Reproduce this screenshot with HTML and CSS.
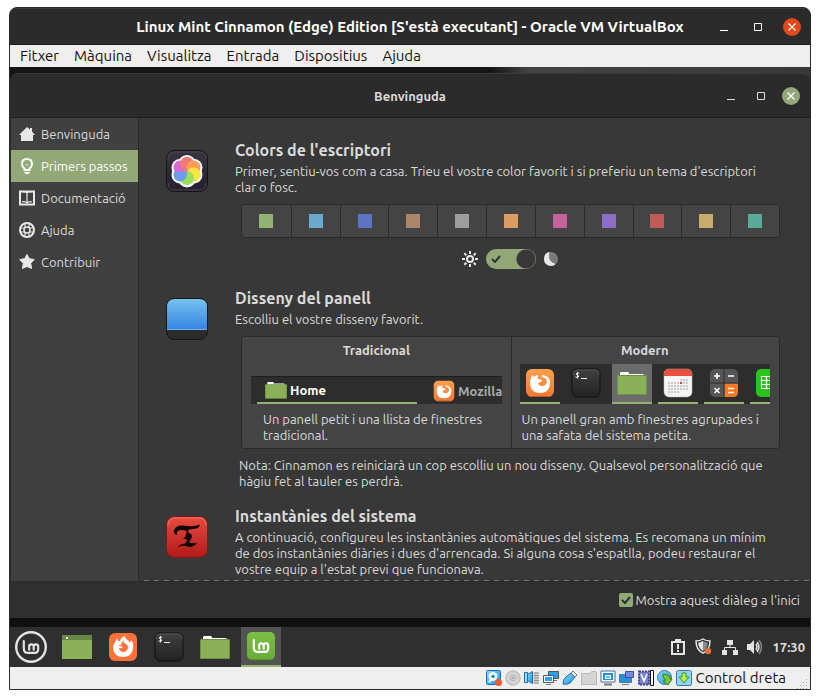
FILE: index.html
```html
<!DOCTYPE html>
<html lang="ca">
<head>
<meta charset="utf-8">
<meta name="viewport" content="width=device-width, initial-scale=1">
<title>Benvinguda</title>
<link rel="stylesheet" href="styles.css">
</head>
<body>
<svg class="defs" aria-hidden="true">
  <defs>
    <linearGradient id="g-dark" x1="0" y1="0" x2="0" y2="1"><stop offset="0" stop-color="#404040"/><stop offset="1" stop-color="#222"/></linearGradient>
    <linearGradient id="g-orange" x1="0" y1="0" x2="0" y2="1"><stop offset="0" stop-color="#ffa04c"/><stop offset="1" stop-color="#f27835"/></linearGradient>
    <linearGradient id="g-green" x1="0" y1="0" x2="0" y2="1"><stop offset="0" stop-color="#7cbf45"/><stop offset="1" stop-color="#69ac36"/></linearGradient>
    <linearGradient id="g-sky" x1="0" y1="0" x2="0" y2="1"><stop offset="0" stop-color="#77c4ee"/><stop offset="1" stop-color="#3584e4"/></linearGradient>
    <linearGradient id="g-red" x1="0" y1="0" x2="0" y2="1"><stop offset="0" stop-color="#e84c40"/><stop offset="1" stop-color="#b11a1b"/></linearGradient>
    <linearGradient id="g-plum" x1="0" y1="0" x2="0" y2="1"><stop offset="0" stop-color="#3a3340"/><stop offset="1" stop-color="#271f2e"/></linearGradient>
    <linearGradient id="g-blue" x1="0" y1="0" x2="1" y2="1"><stop offset="0" stop-color="#8fe0ff"/><stop offset="1" stop-color="#1b8fe0"/></linearGradient>
  </defs>
  <symbol id="folder" viewBox="0 0 30 24"><path d="M3 6V2l1-1h7l1 1v1h14l1 1v3H3z" fill="#fff"/><path d="M0 5q0-1 1-1h28q1 0 1 1v18q0 1-1 1H1q-1 0-1-1z" fill="#6c9044"/><path d="M1 5h28v18H1z" fill="#8bb158"/></symbol>
  <symbol id="terminal" viewBox="0 0 30 30"><rect x="1" y="1" width="28" height="28" rx="5" fill="url(#g-dark)" stroke="#111"/><path d="M2 7q0-5 5-5h16q5 0 5 5" fill="none" stroke="#575757"/><path d="M8.200 5.500Q7 4.800 5.800 5.200Q4.300 6 6.200 7.100Q8.700 8 7.400 9Q6 9.800 4.500 8.800M6.500 4v6.500" fill="none" stroke="#eee"/><path d="M10 10.500h6" stroke="#eee"/></symbol>
  <symbol id="firefox" viewBox="0 0 30 30"><rect x="1" y="1" width="28" height="28" rx="6" fill="url(#g-orange)"/><path d="M7 28.500h16" stroke="#b75a20"/><path d="M6 10l1-3 2 2q2-2 4-2-1 2 0 4l4 1q0 2-4 3 1 3 4 3 4 0 5-4 0-3-2-4l-3-1q-1-2 1-2 8 2 7 9-1 9-10 9T5 16q0-3 1-6z" fill="#fff"/></symbol>
  <symbol id="lm" viewBox="0 0 20 18"><path d="M2 2v8q0 5 5 5h7q4 0 4-4V8a2.500 2.500 0 0 0-5 0v3.500M13 8a2.500 2.500 0 0 0-5 0v3.500" fill="none" stroke="currentColor" stroke-width="2.400" stroke-linecap="round"/></symbol>
</svg>

<main class="vm">
  <header class="titlebar host">
    <h1 class="caption">Linux Mint Cinnamon (Edge) Edition [S'està executant] - Oracle VM VirtualBox</h1>
    <div class="controls">
      <button type="button" aria-label="Minimitza"><svg width="10" height="10"><path d="M1 8.500h8" stroke="#fff"/></svg></button>
      <button type="button" aria-label="Maximitza"><svg width="10" height="10"><path d="M1.500 1.500h7v7h-7z" fill="none" stroke="#fff"/></svg></button>
      <button type="button" class="close orange" aria-label="Tanca"><svg width="10" height="10"><path d="M1.500 1.500l7 7m0-7l-7 7" stroke="#fff" stroke-width="1.200"/></svg></button>
    </div>
  </header>
  <nav class="menubar">
    <button type="button">Fitxer</button><button type="button">Màquina</button><button type="button">Visualitza</button><button type="button">Entrada</button><button type="button">Dispositius</button><button type="button">Ajuda</button>
  </nav>

  <section class="desktop">
    <div class="welcome">
      <header class="titlebar guest">
        <h2 class="caption">Benvinguda</h2>
        <div class="controls">
          <button type="button" aria-label="Minimitza"><svg width="10" height="10"><path d="M1 8.500h8" stroke="#ddd"/></svg></button>
          <button type="button" aria-label="Maximitza"><svg width="10" height="10"><path d="M1.500 1.500h7v7h-7z" fill="none" stroke="#ddd"/></svg></button>
          <button type="button" class="close green" aria-label="Tanca"><svg width="10" height="10"><path d="M1.500 1.500l7 7m0-7l-7 7" stroke="#fff" stroke-width="1.200"/></svg></button>
        </div>
      </header>

      <div class="body">
        <nav class="sidebar">
          <button type="button"><svg width="16" height="16"><path d="M8 1L0 9h2v6h12V9h2l-3-3.500V2h-2v1.500z" fill="#e8e8e8"/></svg>Benvinguda</button>
          <button type="button" class="active"><svg width="16" height="16"><path d="M5.500 10.500Q3 8.500 3 6q0-5 5-5t5 5q0 2.500-2.500 4.500V12h-5z" fill="none" stroke="#fff" stroke-width="2"/><path d="M5.500 14h5v1l-1 1h-3l-1-1z" fill="#fff"/><path d="M6 6h4L8 8z" fill="#c9d8ba"/></svg>Primers passos</button>
          <button type="button"><svg width="16" height="16"><path d="M1 1.500v13h14v-13z" fill="none" stroke="#e8e8e8" stroke-width="2"/><path d="M3 2q3-1 5 1 2-2 5-1M8 3v10M3 12q3-1 5 1 2-2 5-1" fill="none" stroke="#e8e8e8" stroke-width="1.200"/></svg>Documentació</button>
          <button type="button"><svg width="16" height="16" fill="none" stroke="#e8e8e8"><circle cx="8" cy="8" r="7" stroke-width="2"/><circle cx="8" cy="8" r="3" stroke-width="1.500"/><path d="M6 1v5M10 1v5M6 10v5M10 10v5M1 6h5M1 10h5M10 6h5M10 10h5" stroke-width="1.200"/></svg>Ajuda</button>
          <button type="button"><svg width="16" height="16"><path d="M8 .5l2.300 4.200 5 .9-3.600 3.600.8 5.200L8 12.500l-4.500 1.900.8-5.200L.7 5.600l5-.9z" fill="#e8e8e8" stroke="#e8e8e8" stroke-linejoin="round"/></svg>Contribuir</button>
        </nav>

        <div class="content">
          <article>
            <svg class="badge" width="42" height="42" viewBox="0 0 42 42"><rect x=".5" y=".5" width="41" height="41" rx="8" fill="url(#g-plum)" stroke="#151218"/><path d="M2 9q0-7 7-7h24q7 0 7 7M2 33q0 7 7 7h24q7 0 7-7" fill="none" stroke="#4c4652"/>
              <g fill="#fff"><circle cx="21" cy="14" r="9"/><circle cx="28" cy="17.500" r="8.500"/><circle cx="28" cy="25" r="8.500"/><circle cx="21" cy="28.500" r="9"/><circle cx="14" cy="25" r="8.500"/><circle cx="14" cy="17.500" r="8.500"/></g>
              <circle cx="14.500" cy="17.500" r="7" fill="#d968d2"/><circle cx="21" cy="14" r="7.200" fill="#ee7a7a"/><circle cx="27.500" cy="17.500" r="7" fill="#ff9c58"/><circle cx="27.500" cy="24.500" r="7" fill="#ffe63c"/><circle cx="21" cy="28" r="7" fill="#98de5c"/><path d="M21 21Q21 31.500 14.500 31.500T7.500 24.500Q7.500 22 9 20.500q6 3 12 .5z" fill="#6c9de8"/><path d="M20 21Q9 24 8 17q0-4 4-6 1 8 8 10z" fill="#d968d2"/></svg>
            <div class="text">
              <h3>Colors de l'escriptori</h3>
              <p>Primer, sentiu-vos com a casa. Trieu el vostre color favorit i si preferiu un tema d'escriptori clar o fosc.</p>
              <div class="swatches">
                <button type="button" aria-label="Verd"><i class="c1"></i></button><button type="button" aria-label="Aigua"><i class="c2"></i></button><button type="button" aria-label="Blau"><i class="c3"></i></button><button type="button" aria-label="Marró"><i class="c4"></i></button><button type="button" aria-label="Gris"><i class="c5"></i></button><button type="button" aria-label="Taronja"><i class="c6"></i></button><button type="button" aria-label="Rosa"><i class="c7"></i></button><button type="button" aria-label="Porpra"><i class="c8"></i></button><button type="button" aria-label="Vermell"><i class="c9"></i></button><button type="button" aria-label="Sorra"><i class="c10"></i></button><button type="button" aria-label="Turquesa"><i class="c11"></i></button>
              </div>
              <label class="theme">
                <svg width="16" height="16" fill="none" stroke="#e8e8e8" stroke-width="2"><circle cx="8" cy="8" r="3"/><path d="M8 0v3M8 13v3M0 8h3M13 8h3M2.300 2.300l2 2M11.700 11.700l2 2M13.700 2.300l-2 2M4.300 11.700l-2 2"/></svg>
                <span class="switch"><input type="checkbox" checked aria-label="Tema fosc"><svg width="10" height="8"><path d="M1 4l3 3 5-6" fill="none" stroke="#2e3436" stroke-width="2"/></svg></span>
                <svg width="14" height="14"><circle cx="7" cy="7" r="7" fill="#7b7b7b"/><path d="M5.500 0Q0 1 0 7t7 7q3 0 4.500-2Q5 10 5 4.500 5 2 5.500 0z" fill="#e8e8e8"/></svg>
              </label>
            </div>
          </article>

          <article>
            <svg class="badge" width="42" height="42"><rect x=".5" y=".5" width="41" height="41" rx="8" fill="#2b2b2b" stroke="#161616"/><path d="M1 31V9q0-8 8-8h24q8 0 8 8v22z" fill="url(#g-sky)"/><path d="M1 31.500h40" stroke="#6cb3f5"/></svg>
            <div class="text">
              <h3>Disseny del panell</h3>
              <p>Escolliu el vostre disseny favorit.</p>
              <div class="layouts">
                <button type="button" class="traditional">
                  <b>Tradicional</b>
                  <span class="preview">
                    <span class="task on"><svg width="22" height="18"><use href="#folder"/></svg>Home</span>
                    <span class="task"><svg width="22" height="22"><use href="#firefox"/></svg>Mozilla</span>
                  </span>
                  <span class="desc">Un panell petit i una llista de finestres tradicional.</span>
                </button>
                <button type="button" class="modern">
                  <b>Modern</b>
                  <span class="preview">
                    <span class="app run"><svg width="30" height="30"><use href="#firefox"/></svg></span>
                    <span class="app"><svg width="30" height="30"><use href="#terminal"/></svg></span>
                    <span class="app run focus"><svg width="30" height="24"><use href="#folder"/></svg></span>
                    <span class="app run"><svg width="30" height="30"><rect x="1" y="1" width="28" height="28" rx="5" fill="#f5f5f5" stroke="#bbb" stroke-width=".5"/><path d="M1 8V6q0-5 5-5h18q5 0 5 5v2z" fill="#e8503f"/><path d="M17 12h9M5 15h21M5 18h21M5 21h21M5 24h12" stroke="#c9c9c9" stroke-width="2" stroke-dasharray="2 1"/><path d="M17 14h2v2h-2z" fill="#e23b2e"/></svg></span>
                    <span class="app run"><svg width="30" height="30"><rect x="1" y="1" width="28" height="28" rx="5" fill="#565656"/><path d="M15.500 15.500H29V24q0 5-5 5h-8.500z" fill="#ff7724"/><path d="M15 1v28M1 15h28" stroke="#2c2c2c"/><path d="M5 8h6M8 5v6M19 8h6M5.500 20l5 5m0-5l-5 5M19 20.500h6M19 24.500h6" stroke="#fff" stroke-width="1.500"/></svg></span>
                    <span class="app run"><svg width="30" height="30"><rect x="1" y="1" width="28" height="28" rx="5" fill="#2cc41c"/><path d="M6.500 8.500h17v12h-17zM6 12.500h17M6 16.500h17M11.500 8v12M17.500 8v12" fill="none" stroke="#fff" stroke-width="1.200"/></svg></span>
                  </span>
                  <span class="desc">Un panell gran amb finestres agrupades i una safata del sistema petita.</span>
                </button>
              </div>
              <p class="note">Nota: Cinnamon es reiniciarà un cop escolliu un nou disseny. Qualsevol personalització que hàgiu fet al tauler es perdrà.</p>
            </div>
          </article>

          <article>
            <svg class="badge" width="42" height="42"><rect x=".5" y=".5" width="41" height="41" rx="8" fill="url(#g-red)" stroke="#7e1a17"/><path d="M2 9q0-7 7-7h24q7 0 7 7" fill="none" stroke="#ee7067"/><path d="M11 19Q7 18 8 14q2-5 9-4.500 11 2 17-1-1 4-6 4.500-3 0-5 .500-1 2-1 3 4 1 4 4-1 3-3 6 3 1 8 .500-3 4-8 4-5-2-8-1l-3 1.500q2-4 6-3.500 3-2 3-4-3-2-5-1 4-1 4-5 0-2 1-3-7-2-9 0-2 1-1 3z" fill="#120606"/></svg>
            <div class="text">
              <h3>Instantànies del sistema</h3>
              <p>A continuació, configureu les instantànies automàtiques del sistema. Es recomana un mínim de dos instantànies diàries i dues d'arrencada. Si alguna cosa s'espatlla, podeu restaurar el vostre equip a l'estat previ que funcionava.</p>
            </div>
          </article>
        </div>
      </div>

      <footer class="actions">
        <label><input type="checkbox" checked><svg width="14" height="14"><path d="M3 7l3 3 5-6" fill="none" stroke="#2e3436" stroke-width="2"/></svg>Mostra aquest diàleg a l'inici</label>
      </footer>
    </div>

    <div class="panel">
      <button type="button" aria-label="Menú"><svg width="32" height="32"><circle cx="16" cy="16" r="14.800" fill="none" stroke="#e4e4e4" stroke-width="2.400"/><svg x="7" y="8" width="18" height="17" color="#e4e4e4"><use href="#lm"/></svg></svg></button>
      <button type="button" aria-label="Mostra l'escriptori"><svg width="30" height="24"><path d="M0 0h30v24H0z" fill="#8bb158"/><path d="M0 0h30v5H0z" fill="#678844"/><path d="M4 2h2v2H4z" fill="#fff"/></svg></button>
      <button type="button" aria-label="Firefox"><svg width="30" height="30"><rect x="1" y="1" width="28" height="28" rx="6" fill="#ff7139"/><path d="M7 10l2-4 1 3h2q1-4 5-5 0 3 3 4l2 3 1-3q3 3 2 8-1 9-10 9T5 16q0-3 2-6z" fill="#fff"/><path d="M16 8q-1 2 0 3 4 1 4 5-1 4-5 4-4-1-4-4 2 1 4-1-2-1-4-1 0-1 2-1 0-3 3-5z" fill="#ff7139"/></svg></button>
      <button type="button" aria-label="Terminal"><svg width="30" height="30"><use href="#terminal"/></svg></button>
      <button type="button" aria-label="Fitxers"><svg width="30" height="24"><use href="#folder"/></svg></button>
      <button type="button" class="focus" aria-label="Benvinguda"><svg width="30" height="30"><rect x="1" y="1" width="28" height="28" rx="5" fill="url(#g-green)"/><path d="M5 29h20" stroke="#47781f"/><svg x="6" y="7" width="18" height="17" color="#fff"><use href="#lm"/></svg></svg></button>
      <div class="tray">
        <svg width="16" height="16"><path d="M2 3h12v12H2z" fill="none" stroke="#e4e4e4" stroke-width="2"/><path d="M5 0h6v3H5zM7 5h2v5H7zM7 11h2v2H7z" fill="#e4e4e4"/></svg>
        <svg width="18" height="18"><path d="M8 1q3 2 7 2 0 9-7 12Q1 12 1 3q4 0 7-2z" fill="none" stroke="#e4e4e4" stroke-width="1.500"/><path d="M8 3q2 1 5 2-1 6-5 8z" fill="#8b8b8b"/><path d="M8 3Q6 4 3 5q1 6 5 8z" fill="#e4e4e4"/><circle cx="13" cy="13" r="3.200" fill="#e0723a"/></svg>
        <svg width="16" height="16"><path d="M5 1h6v5H5zM0 11h5v5H0zM11 11h5v5h-5z" fill="#e4e4e4"/><path d="M8 5v3.500M2.500 12V8.500h11V12" fill="none" stroke="#e4e4e4"/></svg>
        <svg width="16" height="16"><path d="M0 5h3l4-4v14l-4-4H0z" fill="#e4e4e4"/><path d="M9 5q2 3 0 6M10 3q4 5 0 10" fill="none" stroke="#e4e4e4" stroke-width="1.500"/><path d="M12 1q5 7 0 14" fill="none" stroke="#888" stroke-width="1.500"/></svg>
        <time>17:30</time>
      </div>
    </div>
  </section>

  <footer class="statusbar">
    <svg width="16" height="16"><rect x=".5" y=".5" width="14" height="14" rx="1" fill="url(#g-blue)" stroke="#2269b4"/><circle cx="7" cy="6.500" r="4" fill="#d8f4ff" stroke="#fff"/><circle cx="7" cy="6.500" r="1.500" fill="#1a5ea6"/><path d="M3 12l4-4" stroke="#fff" stroke-width="2"/><circle cx="12.500" cy="12.500" r="3.500" fill="#f15a30"/></svg>
    <svg width="16" height="16"><circle cx="8" cy="8" r="7.200" fill="#d3d3d3" stroke="#b5b5b5"/><circle cx="8" cy="8" r="2.500" fill="#e2e2e2" stroke="#aaa"/><circle cx="8" cy="8" r="1" fill="#999"/></svg>
    <svg width="16" height="16"><path d="M9.500 2h5v12h-5" fill="#d0d0d0"/><path d="M10 3h5M10 5.500h5M10 8h5M10 10.500h5M10 13h5" stroke="#8c8c8c"/><path d="M.5 2.500h3v10h-3z" fill="#8fe0ff" stroke="#2269b4"/><path d="M3.500 4.500l5-3v12l-5-3z" fill="url(#g-blue)" stroke="#2269b4"/></svg>
    <svg width="16" height="16"><path d="M5.500 1.500h10v7h-10z" fill="#2fa0e8" stroke="#555"/><path d="M.5 5.500h10v7H.5z" fill="#fff" stroke="#555"/><path d="M2 7h7v4H2z" fill="#2fa0e8"/><path d="M3 14.500h5M11 10.500h3" stroke="#777"/></svg>
    <svg width="16" height="16"><path d="M1 14q0-5 3-7l5-4 4 4-5 6q-3 2-7 1z" fill="url(#g-blue)" stroke="#2269b4"/><path d="M9 3l2-2 4 4-2 2z" fill="#fff" stroke="#777"/></svg>
    <svg width="16" height="16"><path d="M.5 3.500h9l1-2h4l1 1v12H.5z" fill="#d4d4d4" stroke="#b8b8b8"/></svg>
    <svg width="16" height="16"><path d="M1 1h14v11H1z" fill="#fff" stroke="#456f95"/><path d="M3 3h10v7H3z" fill="#2292df"/><path d="M5.500 5.500h5v3h-5z" fill="#69c2f8" stroke="#fff"/><path d="M4 14.500h8" stroke="#777" stroke-width="2"/></svg>
    <svg width="16" height="16"><path d="M.5 4.500h12v8H.5z" fill="#2292df" stroke="#55778d"/><path d="M6.500 1.500h8v6h-8z" fill="#7986dd" stroke="#3e4ba8"/><path d="M3 14.500h7" stroke="#777"/></svg>
    <svg width="16" height="16"><path d="M1 1.500h10v13H1z" fill="#7d84d1" stroke="#3c4294" stroke-width="2" stroke-dasharray="2 1"/><path d="M3 4l3 7 3-7" fill="none" stroke="#fff" stroke-width="1.500"/><path d="M12.500.5h3v15h-3z" fill="#fff" stroke="#111"/></svg>
    <svg width="16" height="16"><circle cx="7.500" cy="7.500" r="7" fill="url(#g-blue)" stroke="#3b79b5"/><path d="M6 4l5 1q3 1 2 4h2l-4 6-5-4h2q1-2-2-4z" fill="#79c838" stroke="#38801c"/></svg>
    <svg width="16" height="16"><rect x=".5" y=".5" width="15" height="15" rx="2" fill="#8ed6f7" stroke="#3576ad"/><path d="M6 3h4v4h3l-5 6-5-6h3z" fill="#b5ee57" stroke="#44901d"/></svg>
    <span>Control dreta</span>
    <svg class="grip" width="12" height="12"><path d="M9.500 2v10M6.500 5v7M3.500 8v4M.5 11v1" stroke="#aaa" stroke-dasharray="1 2"/></svg>
  </footer>
</main>
</body>
</html>
```

FILE: styles.css
```css
* { box-sizing: border-box; }

body {
  margin: 0;
  min-height: 100vh;
  padding: 7px 9px 9px;
  display: flex;
  background: #fff;
  font: 13px/16px Ubuntu, "Noto Sans", sans-serif;
  color: #dadada;
}

button {
  margin: 0;
  padding: 0;
  border: 0;
  background: none;
  color: inherit;
  font: inherit;
}

svg { display: block; flex: none; }
.defs { position: absolute; width: 0; height: 0; }
h1, h2, h3, p { margin: 0; }

.vm {
  flex: 1;
  min-width: 0;
  display: flex;
  flex-direction: column;
  border: 1px solid #2b2b2b;
  border-radius: 8px 8px 0 0;
  overflow: hidden;
  background: #2b2b2b;
}

/* Title bars */
.titlebar {
  display: grid;
  grid-template-columns: 110px 1fr 110px;
  align-items: center;
  background: #2b2b2b;
  border-top: 1px solid #3a3a3a;
  border-bottom: 1px solid #1f1f1f;
}
.titlebar.host { height: 37px; }
.titlebar.guest { height: 45px; border-radius: 8px 8px 0 0; }
.caption {
  grid-column: 2;
  text-align: center;
  white-space: nowrap;
  font-size: 13px;
  font-weight: 700;
}
.host .caption { font-size: 15px; color: #fff; }
.controls {
  display: flex;
  align-items: center;
  justify-content: flex-end;
  gap: 20px;
  padding-right: 10px;
}
.host .controls { gap: 24px; padding-right: 9px; }
.close {
  width: 18px;
  height: 18px;
  display: grid;
  place-items: center;
  border-radius: 50%;
}
.close.orange { background: #e34918; }
.close.green { background: #92a876; }
.controls .close { margin-left: -4px; }

/* Host menu */
.menubar {
  display: flex;
  gap: 15px;
  height: 22px;
  padding: 0 10px;
  background: #efefef;
  color: #111;
  font-size: 15px;
}

/* Guest screen */
.desktop {
  flex: 1;
  display: flex;
  flex-direction: column;
  padding-top: 6px;
  background: linear-gradient(90deg, #151515 60%, #444 65%, #383838) top / 100% 20px no-repeat, #101010;
}
.welcome {
  flex: 1;
  display: flex;
  flex-direction: column;
  margin-bottom: 9px;
}
.body {
  flex: 1;
  display: flex;
  background: #383838;
}
.sidebar {
  flex: none;
  width: 129px;
  border-left: 1px solid #2b2b2b;
  border-right: 1px solid #2b2b2b;
  background: #404040;
}
.sidebar button {
  display: flex;
  align-items: center;
  gap: 6px;
  width: 100%;
  height: 32px;
  padding-left: 8px;
  white-space: nowrap;
}
.sidebar .active { background: #92a876; color: #fff; }

.content {
  flex: 1;
  min-width: 0;
  padding: 21px 25px 4px 27px;
  background: repeating-linear-gradient(90deg, transparent 0 5px, #777 5px 10px) bottom / 100% 1px no-repeat;
}
article { display: flex; gap: 27px; }
article + article { margin-top: 18px; }
article:last-child { margin-top: 16px; }
.badge { margin-top: 11px; }
.text { flex: 1; min-width: 0; }
.text p { padding-right: 8px; }
h3 {
  margin-bottom: 2px;
  font-size: 16px;
  line-height: 22px;
  font-weight: 700;
}

.swatches {
  display: grid;
  grid-template-columns: repeat(11, 1fr);
  height: 34px;
  margin: 9px 5px 0 6px;
  border: 1px solid #2a2a2a;
  border-radius: 3px;
  background: #444;
}
.swatches button { display: grid; place-items: center; }
.swatches button + button { border-left: 1px solid #2a2a2a; }
.swatches i { width: 14px; height: 14px; }
.c1 { background: #92b372; }
.c2 { background: #6caacd; }
.c3 { background: #5b73c4; }
.c4 { background: #aa876a; }
.c5 { background: #9d9d9d; }
.c6 { background: #db9d61; }
.c7 { background: #c6619a; }
.c8 { background: #8c6ec9; }
.c9 { background: #c15b58; }
.c10 { background: #c8ac69; }
.c11 { background: #5aaa9a; }

.theme {
  display: flex;
  align-items: center;
  justify-content: center;
  gap: 8px;
  margin-top: 11px;
}
.switch { position: relative; display: block; height: 20px; }
.switch input {
  appearance: none;
  display: block;
  width: 50px;
  height: 20px;
  margin: 0;
  border-radius: 10px;
  background: radial-gradient(circle at 40px 10px, #383838 9px, #92a876 10px);
}
.switch svg { position: absolute; left: 5px; top: 6px; }

.layouts {
  display: grid;
  grid-template-columns: 1fr 1fr;
  margin: 9px 5px 0 6px;
  border: 1px solid #2a2a2a;
  border-radius: 3px;
  background: #444;
}
.layouts button {
  display: flex;
  flex-direction: column;
  min-width: 0;
  padding: 5px 9px;
}
.layouts button + button { padding-left: 8px; border-left: 1px solid #2a2a2a; }
.layouts b { align-self: center; }
.preview {
  display: flex;
  width: 100%;
  overflow: hidden;
  background: #2d2d2d;
}
.traditional .preview {
  height: 28px;
  margin-top: 18px;
  padding-left: 6px;
  gap: 8px;
  border-top: 1px solid #1e1e1e;
}
.task {
  flex: none;
  display: flex;
  align-items: center;
  gap: 3px;
  width: 160px;
  padding-left: 8px;
  font-weight: 700;
  color: #aaa;
}
.task.on { border-bottom: 2px solid #92b372; color: #fff; }
.modern .preview { height: 40px; margin-top: 6px; gap: 6px; }
.app {
  flex: none;
  display: grid;
  place-items: center;
  width: 40px;
  border-bottom: 2px solid transparent;
}
.app.run { border-color: #92b372; }
.app.focus { background: #6b6b6b; }
.desc { margin-top: 7px; text-align: left; }
.traditional .desc { padding-left: 12px; }
.modern .desc { padding-left: 2px; }
.text .note { margin-top: 8px; padding: 0 0 0 4px; }

.actions {
  display: flex;
  justify-content: flex-end;
  align-items: center;
  height: 37px;
  padding-right: 10px;
  border-top: 1px solid #2a2a2a;
  background: #2f2f2f;
}
.actions label { position: relative; display: flex; align-items: center; gap: 3px; }
.actions input {
  appearance: none;
  width: 14px;
  height: 14px;
  margin: 0;
  border-radius: 2px;
  background: #92a876;
}
.actions svg { position: absolute; left: 0; top: 1px; }

/* Guest panel */
.panel {
  display: flex;
  align-items: center;
  gap: 6px;
  height: 40px;
  padding: 0 5px 0 1px;
  background: #2f2f2f;
}
.panel button {
  display: grid;
  place-items: center;
  width: 40px;
  height: 40px;
}
.panel .focus { background: #535353; border-bottom: 2px solid #92b372; }
.tray {
  display: flex;
  align-items: center;
  gap: 9px;
  margin-left: auto;
}
.tray time { font-weight: 700; }

/* Host status bar */
.statusbar {
  display: flex;
  align-items: center;
  justify-content: flex-end;
  gap: 3px;
  height: 22px;
  padding-right: 1px;
  background: #efefef;
  color: #111;
  font-size: 15px;
}
.grip { align-self: flex-end; margin-left: 8px; }
```
